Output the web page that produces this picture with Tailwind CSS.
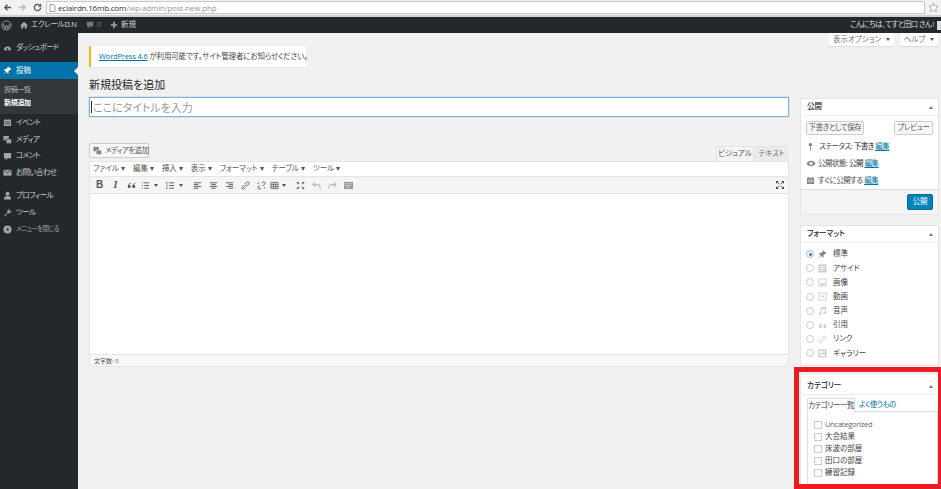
<!DOCTYPE html>
<html lang="ja">
<head>
<meta charset="UTF-8">
<title>新規投稿を追加</title>
<script src="https://cdn.jsdelivr.net/npm/@tailwindcss/browser@4"></script>
</head>
<body class="w-[941px] h-[489px] overflow-hidden whitespace-nowrap bg-[#f1f1f1] text-[#444] text-[7.5px] leading-none [font-feature-settings:'palt'] font-['Open_Sans','Noto_Sans_CJK_JP',sans-serif]">
<!-- browser chrome -->
<div class="h-[17px] bg-[#f2f2f2] border-b-2 border-[#d0d0d0] flex items-center pl-[3px] pr-[2px]">
  <div class="w-[43px] flex items-center gap-[6px] text-[#555]">
    <svg class="w-[9px] h-[9px]" viewBox="0 0 10 10"><path d="M9 5H2M5 2L2 5l3 3" fill="none" stroke="#555" stroke-width="1.5"/></svg>
    <svg class="w-[9px] h-[9px]" viewBox="0 0 10 10"><path d="M1 5h7M5 2l3 3-3 3" fill="none" stroke="#bbb" stroke-width="1.5"/></svg>
    <svg class="w-[9px] h-[9px]" viewBox="0 0 10 10"><path d="M8.5 5A3.5 3.5 0 1 1 7.4 2.4M8.5 1v2.5H6" fill="none" stroke="#555" stroke-width="1.4"/></svg>
  </div>
  <div class="flex-1 h-[13px] bg-white border border-[#c8c8c8] flex items-center pl-[2px] text-[8px] tracking-[-0.2px] text-[#999]">
    <svg class="w-[7px] h-[8px] mr-[2px]" viewBox="0 0 7 8"><path d="M1 .5h3.500L6 2v5.500H1z" fill="none" stroke="#888" stroke-width=".8"/></svg>
    <span><span class="text-[#333]">eclairdn.16mb.com</span>/wp-admin/post-new.php</span>
  </div>
  <svg class="w-[11px] h-[11px] ml-[3px]" viewBox="0 0 12 12"><path d="M6 1l1.500 3.300 3.500.4-2.600 2.400.7 3.500L6 8.900 2.900 10.600l.7-3.500L1 4.700l3.500-.4z" fill="#fff" stroke="#999" stroke-width=".8"/></svg>
</div>
<!-- admin bar -->
<div class="h-[16px] bg-[#23282d] text-[#ccc] flex items-center justify-between">
  <div class="flex items-center">
    <svg class="w-[11px] h-[11px] ml-[1px]" viewBox="0 0 12 12"><circle cx="6" cy="6" r="5" fill="none" stroke="#a0a5aa" stroke-width="1"/><path d="M2.500 4.500l2 5 1.500-4 1.500 4 2-5" fill="none" stroke="#a0a5aa" stroke-width="1"/></svg>
    <svg class="w-[8px] h-[8px] ml-[8px]" viewBox="0 0 10 10"><path d="M5 1L0 5.500h1.500V9.500h2.500V7h2v2.500h2.500v-4H10z" fill="#a0a5aa"/></svg>
    <span class="ml-[3px] tracking-[-0.3px]">エクレール<span class="text-[#ddd]">D.N</span></span>
    <svg class="w-[8px] h-[8px] ml-[9px]" viewBox="0 0 10 10"><path d="M1 1h8v6H5L3 9.500V7H1z" fill="#777"/></svg>
    <span class="ml-[3px] text-[#777]">0</span>
    <svg class="w-[8px] h-[8px] ml-[9px]" viewBox="0 0 10 10"><path d="M4 1h2v3h3v2H6v3H4V6H1V4h3z" fill="#a0a5aa"/></svg>
    <span class="ml-[3px]">新規</span>
  </div>
  <div class="flex items-center">
    <span class="text-[#ddd] tracking-[-0.6px]">こんにちは、てすと田口 さん !</span>
    <span class="w-[4px] h-[9px] ml-[3px] bg-[#ddd]"></span>
  </div>
</div>
<div class="flex h-[456px]">
  <!-- sidebar -->
  <aside class="w-[78px] shrink-0 bg-[#23282d] text-[#ccc] tracking-[-0.6px] pt-[6px]">
    <a class="h-[17px] flex items-center pl-[3px] gap-[4px]"><svg class="w-[9px] h-[9px]" viewBox="0 0 10 10"><path d="M1 8a4 4 0 1 1 8 0z" fill="#a0a5aa"/><circle cx="5" cy="6.500" r="1" fill="#23282d"/></svg>ダッシュボード</a>
    <a class="h-[17px] mt-[6px] flex items-center pl-[3px] gap-[4px] bg-[#0073aa] text-white tracking-normal relative"><svg class="w-[9px] h-[9px]" viewBox="0 0 10 10"><path d="M6 .5l3.500 3.500-1 .5-1 0-1.500 1.500.2 1.800-.7.700L3.300 6.300 1 9l-.5-.5L3 6 .9 3.900l.7-.7 1.800.2L5 1.900V1z" fill="#fff"/></svg>投稿<span class="absolute right-0 top-[5px] border-y-[4px] border-y-transparent border-r-[4px] border-r-[#f1f1f1]"></span></a>
    <div class="h-[35px] bg-[#32373c] pt-[4px] pl-[4px] text-[7px] tracking-[-0.3px] text-[#b4b9be]">
      <p class="h-[13px] flex items-center">投稿一覧</p>
      <p class="h-[13px] flex items-center text-white font-bold">新規追加</p>
    </div>
    <a class="h-[17px] flex items-center pl-[3px] gap-[4px]"><svg class="w-[9px] h-[9px]" viewBox="0 0 10 10"><path d="M1 2h8v7H1zM2.500 1h1v1.500h-1zM6.500 1h1v1.500h-1z" fill="#a0a5aa"/><path d="M2 4.500h6M2 6.500h6" stroke="#23282d" stroke-width=".7"/></svg>イベント</a>
    <a class="h-[17px] flex items-center pl-[3px] gap-[4px]"><svg class="w-[9px] h-[9px]" viewBox="0 0 10 10"><path d="M.5 1h6v5h-6z" fill="#a0a5aa"/><path d="M3.500 4.500h6v5h-6z" fill="#a0a5aa" stroke="#23282d" stroke-width=".6"/></svg>メディア</a>
    <a class="h-[16px] flex items-center pl-[3px] gap-[4px]"><svg class="w-[9px] h-[9px]" viewBox="0 0 10 10"><path d="M1 1h8v6H5L3 9.500V7H1z" fill="#a0a5aa"/></svg>コメント</a>
    <a class="h-[17px] flex items-center pl-[3px] gap-[4px]"><svg class="w-[9px] h-[9px]" viewBox="0 0 10 10"><path d="M.5 2h9v6.500h-9z" fill="#a0a5aa"/><path d="M1 2.500l4 3 4-3" fill="none" stroke="#23282d" stroke-width=".8"/></svg>お問い合わせ</a>
    <a class="h-[17px] mt-[6px] flex items-center pl-[3px] gap-[4px]"><svg class="w-[9px] h-[9px]" viewBox="0 0 10 10"><circle cx="5" cy="3" r="2.200" fill="#a0a5aa"/><path d="M1 9.500c0-3 1.500-4 4-4s4 1 4 4z" fill="#a0a5aa"/></svg>プロフィール</a>
    <a class="h-[17px] flex items-center pl-[3px] gap-[4px]"><svg class="w-[9px] h-[9px]" viewBox="0 0 10 10"><path d="M1 9L5 5a2.500 2.500 0 0 1 3-3.500L6.500 3 7.500 4l1.500-1.500A2.500 2.500 0 0 1 5.500 5.500L2 9.500z" fill="#a0a5aa"/></svg>ツール</a>
    <a class="h-[17px] flex items-center pl-[3px] gap-[4px] text-[6.5px] text-[#a0a5aa]"><svg class="w-[9px] h-[9px]" viewBox="0 0 10 10"><circle cx="5" cy="5" r="4.500" fill="#a0a5aa"/><path d="M6 3L3.500 5 6 7z" fill="#23282d"/></svg>メニューを閉じる</a>
  </aside>
  <!-- main -->
  <main class="flex-1 min-w-0 pl-[11px] pr-[2px]">
    <div class="h-[13px] flex justify-end gap-[6px] pr-[1px] text-[#72777c]">
      <span class="w-[65px] h-[13px] bg-white shadow-[0_1px_1px_rgba(0,0,0,.08)] flex items-center justify-center gap-[5px]">表示オプション<i class="border-x-[2px] border-x-transparent border-t-[3px] border-t-[#555]"></i></span>
      <span class="w-[38px] h-[13px] bg-white shadow-[0_1px_1px_rgba(0,0,0,.08)] flex items-center justify-center gap-[5px]">ヘルプ<i class="border-x-[2px] border-x-transparent border-t-[3px] border-t-[#555]"></i></span>
    </div>
    <div class="w-[217px] h-[21px] bg-white border-l-2 border-[#ffb900] flex items-center pl-[8px] tracking-[-0.15px] shadow-[0_1px_1px_rgba(0,0,0,.04)]">
      <span><a class="text-[#0073aa] underline">WordPress 4.6</a> が利用可能です。サイト管理者にお知らせください。</span>
    </div>
    <h1 class="h-[30px] pt-[5px] flex items-center text-[11px] text-[#23282d]">新規投稿を追加</h1>
    <div class="flex gap-[11px]">
      <div class="w-[700px]">
        <div class="h-[20px] bg-white border border-[#7fb5d5] shadow-[0_0_1px_#5b9dd9] flex items-center pl-[1px] text-[11px] text-[#999]"><span class="w-px h-[12px] bg-[#333] mr-[1px]"></span>ここにタイトルを入力</div>
        <div class="mt-[26px] h-[18px] flex justify-between">
          <span class="w-[60px] h-[15px] bg-[#f7f7f7] border border-[#ccc] rounded-[2px] flex items-center pl-[3px] gap-[3px] tracking-[-0.6px] text-[#555]"><svg class="w-[9px] h-[9px] shrink-0" viewBox="0 0 10 10"><path d="M.5 1h6v5h-6z" fill="#82878c"/><path d="M3.500 4.500h6v5h-6z" fill="#82878c" stroke="#f7f7f7" stroke-width=".6"/></svg>メディアを追加</span>
          <div class="flex items-end">
            <span class="w-[38px] h-[15px] bg-[#f5f5f5] border border-[#e2e2e2] border-b-0 flex items-center justify-center text-[#555]">ビジュアル</span>
            <span class="w-[33px] h-[15px] ml-[1px] mr-[1px] bg-[#ebebeb] border border-[#e2e2e2] border-b-0 flex items-center justify-center text-[#777]">テキスト</span>
          </div>
        </div>
        <div class="h-[206px] border border-[#e5e5e5] bg-white flex flex-col">
          <div class="h-[14px] flex items-center gap-[8px] pl-[3px] text-[#555]">
            <span>ファイル ▾</span><span>編集 ▾</span><span>挿入 ▾</span><span>表示 ▾</span><span>フォーマット ▾</span><span>テーブル ▾</span><span>ツール ▾</span>
          </div>
          <div class="h-[18px] bg-[#f5f5f5] border-y border-[#e5e5e5] flex items-center pl-[5px] pr-[4px] gap-[7px] text-[#555]">
            <b class="text-[10px] w-[9px] text-center font-['Liberation_Sans']">B</b>
            <i class="text-[10px] w-[9px] text-center font-['Liberation_Serif'] font-bold">I</i>
            <svg class="w-[9px] h-[9px] -mr-[2px]" viewBox="0 0 10 10"><path d="M4.500 2C2 3 .8 4.500.8 6a1.700 1.700 0 1 0 1.500-1.500C2.500 3.800 3.500 3 4.500 2.800zM9.500 2C7 3 5.800 4.500 5.800 6a1.700 1.700 0 1 0 1.500-1.500C7.500 3.800 8.500 3 9.500 2.800z" fill="#555"/></svg>
            <span class="flex items-center gap-[4px] mr-[1px]"><svg class="w-[9px] h-[9px]" viewBox="0 0 10 10"><path d="M1 2h1M3.500 2H9M1 5h1M3.500 5H9M1 8h1M3.500 8H9" stroke="#555"/></svg><i class="border-x-[2px] border-x-transparent border-t-[3px] border-t-[#555]"></i></span>
            <span class="flex items-center gap-[4px] mr-[3px]"><svg class="w-[9px] h-[9px]" viewBox="0 0 10 10"><path d="M1 1v2M1 4v2M1 7v2M3.500 2H9M3.500 5H9M3.500 8H9" stroke="#555"/></svg><i class="border-x-[2px] border-x-transparent border-t-[3px] border-t-[#555]"></i></span>
            <svg class="w-[9px] h-[9px]" viewBox="0 0 10 10"><path d="M1 2h8M1 4h5M1 6h8M1 8h5" stroke="#555"/></svg>
            <svg class="w-[9px] h-[9px]" viewBox="0 0 10 10"><path d="M1 2h8M2.500 4h5M1 6h8M2.500 8h5" stroke="#555"/></svg>
            <svg class="w-[9px] h-[9px]" viewBox="0 0 10 10"><path d="M1 2h8M4 4h5M1 6h8M4 8h5" stroke="#555"/></svg>
            <svg class="w-[9px] h-[9px]" viewBox="0 0 10 10"><path d="M4 6l2-2M3.500 4.500L1.500 6.500a1.400 1.400 0 0 0 2 2l2-2M4.500 3.500l2-2a1.400 1.400 0 0 1 2 2l-2 2" fill="none" stroke="#555" stroke-width="1"/></svg>
            <svg class="w-[9px] h-[9px] -mr-[3px]" viewBox="0 0 10 10"><path d="M3.500 4.500L1.500 6.500a1.400 1.400 0 0 0 2 2l1-1M6.500 5.500l2-2a1.400 1.400 0 0 0-2-2l-1 1M1 2l1 1M8 7l1 1M2 1v.5M8 9v-.5" fill="none" stroke="#555" stroke-width="1"/></svg>
            <span class="flex items-center gap-[3px] mr-[3px]"><svg class="w-[9px] h-[9px]" viewBox="0 0 10 10"><path d="M1 1.500h8v7H1zM1 4h8M1 6.300h8M3.700 1.500v7M6.300 1.500v7" fill="none" stroke="#555" stroke-width=".8"/></svg><i class="border-x-[2px] border-x-transparent border-t-[3px] border-t-[#555]"></i></span>
            <svg class="w-[9px] h-[9px]" viewBox="0 0 10 10"><path d="M1 1l2.500 2.500M9 1L6.500 3.500M1 9l2.500-2.500M9 9L6.500 6.500" stroke="#555" stroke-width="1.200"/><path d="M1 1h2L1 3zM9 1H7l2 2zM1 9h2L1 7zM9 9H7l2-2z" fill="#555"/></svg>
            <svg class="w-[9px] h-[9px]" viewBox="0 0 10 10"><path d="M1 4h5a3 3 0 0 1 3 3v1.500M3.500 1.500L1 4l2.500 2.500" fill="none" stroke="#bbb" stroke-width="1.200"/></svg>
            <svg class="w-[9px] h-[9px]" viewBox="0 0 10 10"><path d="M9 4H4a3 3 0 0 0-3 3v1.500M6.500 1.500L9 4 6.500 6.500" fill="none" stroke="#bbb" stroke-width="1.200"/></svg>
            <svg class="w-[9px] h-[9px]" viewBox="0 0 10 10"><path d="M0 1h10v8H0z" fill="#999"/><path d="M1 3h8M1 5h8M3 7h4" stroke="#eee" stroke-dasharray="1 .6"/></svg>
            <svg class="w-[8px] h-[8px] ml-auto" viewBox="0 0 10 10"><path d="M2 2l2 2M8 2L6 4M2 8l2-2M8 8L6 6" stroke="#444" stroke-width="1.200"/><path d="M0 0h3.500L0 3.500zM10 0H6.500L10 3.500zM0 10h3.500L0 6.500zM10 10H6.500L10 6.500z" fill="#444"/></svg>
          </div>
          <div class="flex-1 bg-white"></div>
          <div class="h-[12px] border-t border-[#e5e5e5] bg-[#f7f7f7] flex items-center pl-[4px] text-[#555] text-[6px]">文字数: 0</div>
        </div>
      </div>
      <div class="w-[139px] pt-px">
        <!-- publish -->
        <section class="h-[117px] bg-white border border-[#e5e5e5] flex flex-col">
          <h2 class="h-[17px] shrink-0 border-b border-[#eee] flex items-center justify-between pl-[6px] pr-[5px] font-medium text-[#23282d]">公開<i class="border-x-[2px] border-x-transparent border-b-[3px] border-b-[#72777c]"></i></h2>
          <div class="flex-1 px-[5px] pt-[5px]">
            <div class="flex justify-between tracking-[-0.4px]">
              <span class="w-[58px] h-[14px] bg-[#f7f7f7] border border-[#ccc] rounded-[2px] flex items-center justify-center text-[#555]">下書きとして保存</span>
              <span class="w-[39px] h-[14px] bg-[#f7f7f7] border border-[#ccc] rounded-[2px] flex items-center justify-center text-[#555]">プレビュー</span>
            </div>
            <div class="tracking-[-0.5px]">
              <p class="h-[17px] mt-[3px] flex items-center gap-[4px]"><svg class="w-[9px] h-[9px]" viewBox="0 0 10 10"><circle cx="5" cy="3" r="2" fill="#82878c"/><path d="M4.500 5h1v4.500h-1z" fill="#82878c"/></svg><span>ステータス: <span class="text-[#222]">下書き</span> <a class="text-[#0073aa] underline">編集</a></span></p>
              <p class="h-[17px] flex items-center gap-[2px]"><svg class="w-[10px] h-[9px]" viewBox="0 0 10 10"><path d="M0 5c2-4 8-4 10 0-2 4-8 4-10 0z" fill="#82878c"/><circle cx="5" cy="5" r="1.800" fill="#fff"/></svg><span>公開状態: <span class="text-[#222]">公開</span> <a class="text-[#0073aa] underline">編集</a></span></p>
              <p class="h-[17px] flex items-center gap-[3px]"><svg class="w-[9px] h-[9px]" viewBox="0 0 10 10"><path d="M1 2h8v7H1zM2.500 1h1v1.500h-1zM6.500 1h1v1.500h-1z" fill="#82878c"/><path d="M2 4.500h6M2 6.500h6" stroke="#fff" stroke-width=".7"/></svg><span>すぐに公開する <a class="text-[#0073aa] underline">編集</a></span></p>
            </div>
          </div>
          <div class="h-[25px] bg-[#f5f5f5] border-t border-[#ddd] flex items-center justify-end pr-[5px]">
            <span class="w-[26px] h-[16px] bg-[#0085ba] border border-[#006799] rounded-[2px] text-white flex items-center justify-center">公開</span>
          </div>
        </section>
        <!-- format -->
        <section class="h-[141px] mt-[10px] bg-white border border-[#e5e5e5]">
          <h2 class="h-[17px] border-b border-[#eee] flex items-center justify-between pl-[6px] pr-[5px] font-medium text-[#23282d]">フォーマット<i class="border-x-[2px] border-x-transparent border-b-[3px] border-b-[#72777c]"></i></h2>
          <ul class="pl-[5px] pt-[4px]">
            <li class="h-[14.200px] flex items-center gap-[4px]"><span class="w-[8px] h-[8px] rounded-full border border-[#b4b9be] flex items-center justify-center"><span class="w-[3px] h-[3px] rounded-full bg-[#1e8cbe]"></span></span><svg class="w-[9px] h-[9px]" viewBox="0 0 10 10"><path d="M6 .5l3.500 3.500-1 .5-1 0-1.500 1.500.2 1.800-.7.700L3.300 6.300 1 9l-.5-.5L3 6 .9 3.900l.7-.7 1.800.2L5 1.900V1z" fill="#82878c"/></svg><span class="ml-[2px]">標準</span></li>
            <li class="h-[14.200px] flex items-center gap-[4px]"><span class="w-[8px] h-[8px] rounded-full border border-[#ccc]"></span><svg class="w-[9px] h-[9px]" viewBox="0 0 10 10"><path d="M.5.5h9v9H.5z" fill="#ccc"/><path d="M2 3h6M2 5h6M2 7h4" stroke="#fff"/></svg><span class="ml-[2px]">アサイド</span></li>
            <li class="h-[14.200px] flex items-center gap-[4px]"><span class="w-[8px] h-[8px] rounded-full border border-[#ccc]"></span><svg class="w-[9px] h-[9px]" viewBox="0 0 10 10"><path d="M.5.5h9v9H.5z" fill="#ccc"/><path d="M1.500 1.500h7v7h-7z" fill="#fff"/><path d="M2 8l2-3 1.500 1.500L7 4.500 8 8z" fill="#ccc"/></svg><span class="ml-[2px]">画像</span></li>
            <li class="h-[14.200px] flex items-center gap-[4px]"><span class="w-[8px] h-[8px] rounded-full border border-[#ccc]"></span><svg class="w-[9px] h-[9px]" viewBox="0 0 10 10"><path d="M.5.5h9v9H.5z" fill="#ccc"/><path d="M1.500 1.500h7v7h-7z" fill="#fff"/><path d="M4 3l3 2-3 2z" fill="#ccc"/></svg><span class="ml-[2px]">動画</span></li>
            <li class="h-[14.200px] flex items-center gap-[4px]"><span class="w-[8px] h-[8px] rounded-full border border-[#ccc]"></span><svg class="w-[9px] h-[9px]" viewBox="0 0 10 10"><path d="M3 2l6-1.500V7.500a1.500 1.200 0 1 1-1-1.100V3L4 4v4.500a1.500 1.200 0 1 1-1-1.100z" fill="#ccc"/></svg><span class="ml-[2px]">音声</span></li>
            <li class="h-[14.200px] flex items-center gap-[4px]"><span class="w-[8px] h-[8px] rounded-full border border-[#ccc]"></span><svg class="w-[9px] h-[9px]" viewBox="0 0 10 10"><path d="M4.500 2C2 3 1 4.500 1 6a1.700 1.700 0 1 0 1.500-1.500C2.700 3.800 3.500 3 4.500 2.800zM9.500 2C7 3 6 4.500 6 6a1.700 1.700 0 1 0 1.500-1.500C7.700 3.800 8.500 3 9.500 2.800z" fill="#ccc"/></svg><span class="ml-[2px]">引用</span></li>
            <li class="h-[14.200px] flex items-center gap-[4px]"><span class="w-[8px] h-[8px] rounded-full border border-[#ccc]"></span><svg class="w-[9px] h-[9px]" viewBox="0 0 10 10"><path d="M4 6l2-2M3.500 4.500L1.500 6.500a1.400 1.400 0 0 0 2 2l2-2M4.500 3.500l2-2a1.400 1.400 0 0 1 2 2l-2 2" fill="none" stroke="#ccc" stroke-width="1"/></svg><span class="ml-[2px]">リンク</span></li>
            <li class="h-[14.200px] flex items-center gap-[4px]"><span class="w-[8px] h-[8px] rounded-full border border-[#ccc]"></span><svg class="w-[9px] h-[9px]" viewBox="0 0 10 10"><path d="M.5.5h9v9H.5z" fill="#ccc"/><path d="M2 2h3v3H2zM6 2h2v2H6zM2 6h6v2H2z" fill="#fff"/></svg><span class="ml-[2px]">ギャラリー</span></li>
          </ul>
        </section>
        <!-- category -->
        <section class="h-[120px] mt-[7px] bg-white border border-[#e5e5e5]">
          <h2 class="h-[21px] border-b border-[#eee] pt-[4px] flex items-center justify-between pl-[6px] pr-[5px] font-medium text-[#23282d]">カテゴリー<i class="border-x-[2px] border-x-transparent border-b-[3px] border-b-[#72777c]"></i></h2>
          <div class="flex h-[16px] pl-[6px] pt-[3px] text-[#0073aa] tracking-[-0.5px]">
            <span class="w-[48px] h-[15px] bg-white border border-[#ddd] border-b-white flex items-center justify-center text-[#444] relative z-10">カテゴリー一覧</span>
            <span class="h-[13px] pl-[4px] flex items-center">よく使うもの</span>
          </div>
          <ul class="ml-[6px] h-[90px] border border-[#ddd] pl-[6px] pt-[7px]">
            <li class="h-[12px] flex items-center gap-[2px]"><span class="w-[8px] h-[8px] mr-[1px] border border-[#ccc]"></span><span class="tracking-[-0.25px] text-[#666]">Uncategorized</span></li>
            <li class="h-[12px] flex items-center gap-[2px]"><span class="w-[8px] h-[8px] mr-[1px] border border-[#ccc]"></span><span>大会結果</span></li>
            <li class="h-[12px] flex items-center gap-[2px]"><span class="w-[8px] h-[8px] mr-[1px] border border-[#ccc]"></span><span>床波の部屋</span></li>
            <li class="h-[12px] flex items-center gap-[2px]"><span class="w-[8px] h-[8px] mr-[1px] border border-[#ccc]"></span><span>田口の部屋</span></li>
            <li class="h-[12px] flex items-center gap-[2px]"><span class="w-[8px] h-[8px] mr-[1px] border border-[#ccc]"></span><span>練習記録</span></li>
          </ul>
        </section>
      </div>
    </div>
  </main>
</div>
<!-- red annotation over the category box -->
<div class="absolute left-[794px] top-[367px] w-[147px] h-[122px] border-x-[5px] border-t-[5px] border-b-[5px] border-r-[3px] border-[#ed1c24]"></div>
</body>
</html>
